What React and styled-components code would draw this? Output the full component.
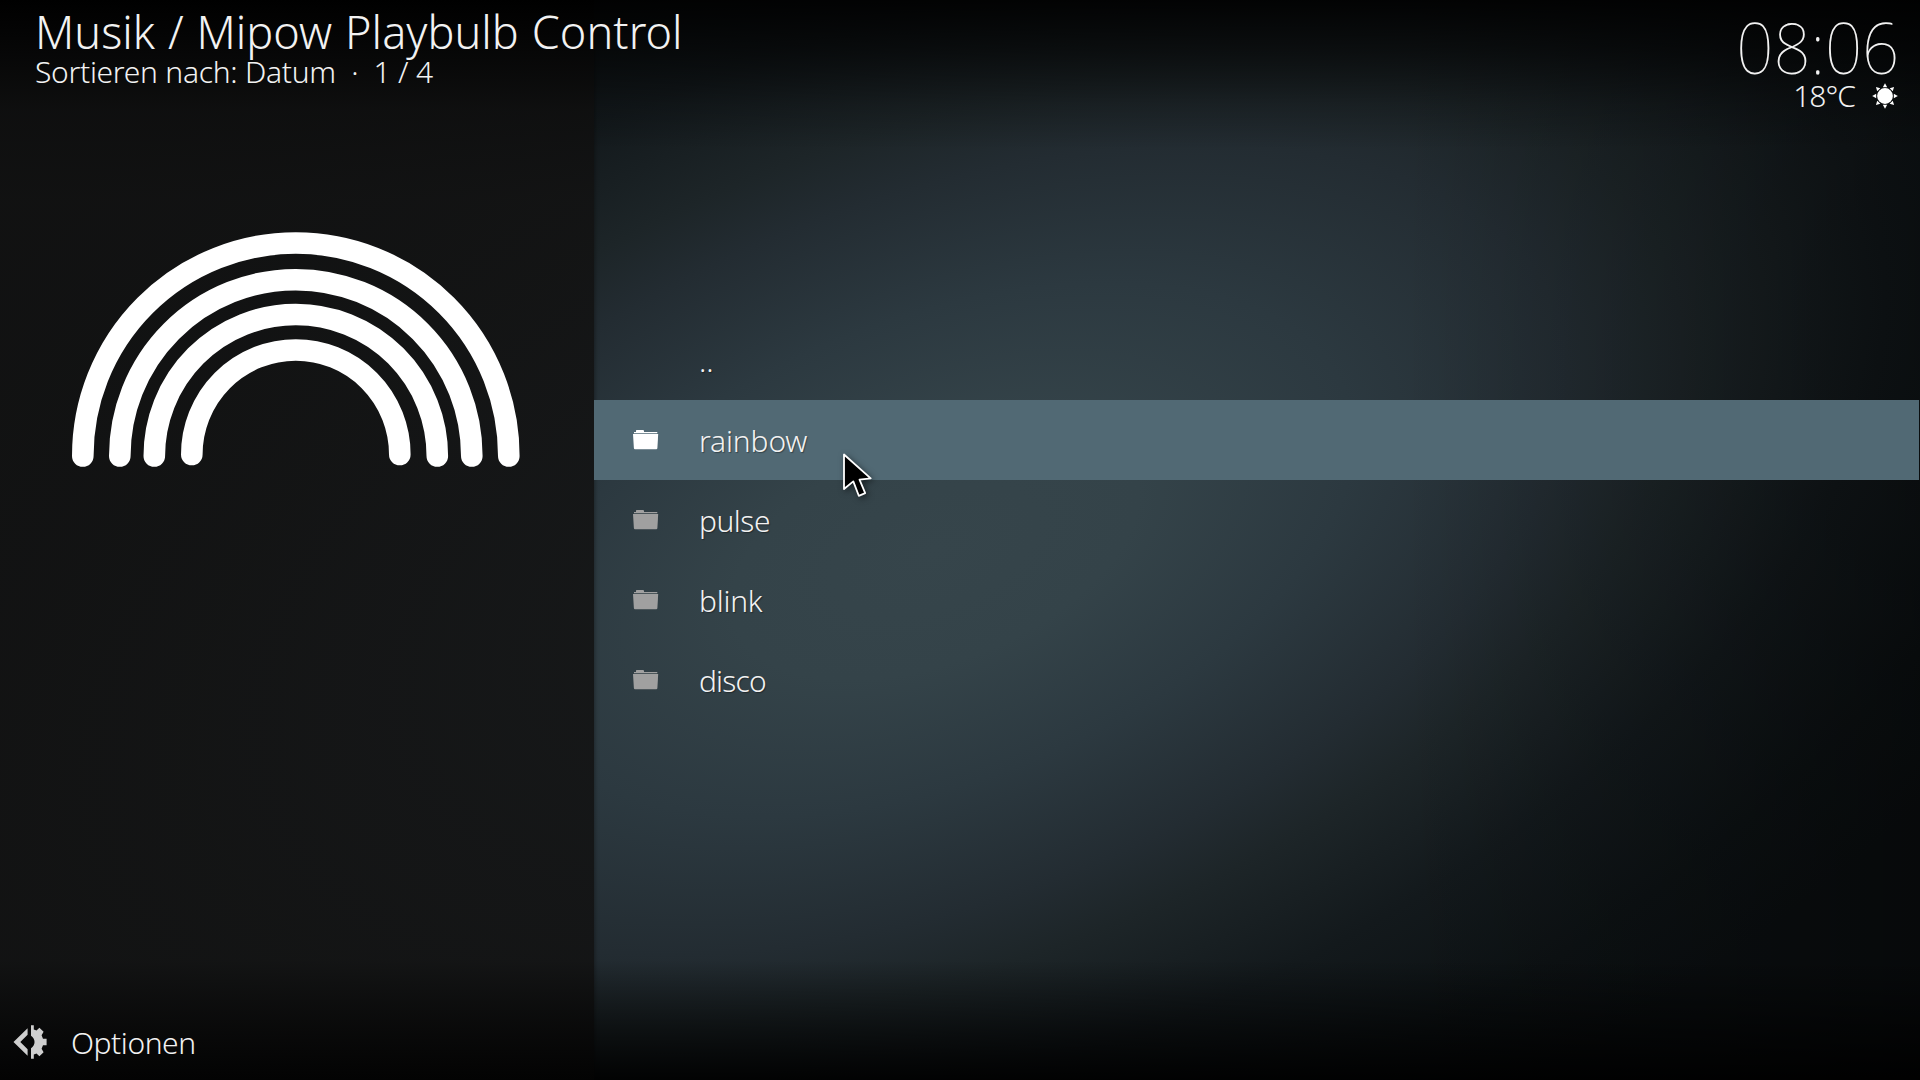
import React from "react";
import styled, { createGlobalStyle } from "styled-components";

const Global = createGlobalStyle`
  *{box-sizing:border-box}
  body{margin:0;background:#000;overflow:hidden}
`;

const Screen = styled.div`
  position: relative;
  isolation: isolate;
  width: 1920px;
  height: 1080px;
  display: flex;
  overflow: hidden;
  color: #f2f2f2;
  font-family: "Noto Sans", "Open Sans", sans-serif;
  font-weight: 300;
  font-size: 30px;
  background: #0b0f11;
`;

const Backdrop = styled.div`
  position: absolute;
  inset: 0;
  z-index: -1;
  &::before {
    content: "";
    position: absolute;
    left: -1065px;
    top: -1450px;
    width: 4000px;
    height: 4000px;
    transform: rotate(-21deg);
    background: radial-gradient(
      ellipse 1330px 700px at center,
      #36454b 0%, #344349 16%, #2c3940 33%, #232c32 50%, #1d2528 59%, #13191c 75%, #0d1214 92%, #0b0f11 105%
    );
  }
  &::after {
    content: "";
    position: absolute;
    inset: 0;
    background:
      linear-gradient(to bottom, rgba(0,0,0,0.9) 0, rgba(0,0,0,0.6) 50px, rgba(0,0,0,0.2) 105px, rgba(0,0,0,0) 150px),
      linear-gradient(to top, rgba(0,0,0,0.92) 0, rgba(0,0,0,0.55) 50px, rgba(0,0,0,0) 120px),
      linear-gradient(to right, rgba(0,0,0,0) 1400px, rgba(0,0,0,0.2) 1700px, rgba(0,0,0,0.4) 1920px);
  }
`;

const Side = styled.aside`
  width: 594px;
  height: 1080px;
  flex: none;
  display: flex;
  flex-direction: column;
  background: linear-gradient(to bottom, rgba(0,0,0,0.94) 0, rgba(15,15,15,0.88) 110px, rgba(18,18,18,0.88) 200px, rgba(18,18,18,0.88) 960px, rgba(3,3,3,0.94) 1080px);
  box-shadow: 1px 0 4px rgba(0, 0, 0, 0.35);
`;

const Heading = styled.header`
  height: 231px;
  padding: 1px 0 0 35px;
  white-space: pre;
`;
const Title = styled.h1`
  margin: 0;
  font-size: 45px;
  line-height: 62px;
  font-weight: 300;
  letter-spacing: 0.05px;
  word-spacing: 1.1px;
`;
const Sorting = styled.div`
  margin-top: -11px;
  line-height: 40px;
  letter-spacing: -0.3px;
  word-spacing: 0.2px;
`;
const Art = styled.svg`
  display: block;
  width: 594px;
  height: 240px;
`;
const Options = styled.footer`
  margin-top: auto;
  height: 76px;
  padding-left: 13px;
  display: flex;
  align-items: center;
  gap: 24px;
  letter-spacing: -0.45px;
`;

const Main = styled.main`
  width: 1326px;
  height: 1080px;
  display: flex;
  flex-direction: column;
`;
const Status = styled.div`
  height: 320px;
  padding: 5px 22px 0 0;
  display: flex;
  flex-direction: column;
  align-items: flex-end;
`;
const Clock = styled.time`
  margin-right: -1px;
  font-size: 70.5px;
  font-weight: 100;
  line-height: 84px;
  transform: scaleX(0.925);
  transform-origin: right center;
`;
const Weather = styled.div`
  margin-top: -13px;
  display: flex;
  align-items: center;
  gap: 17px;
  line-height: 40px;
  letter-spacing: -1px;
`;

const List = styled.ul`
  margin: 0;
  padding: 0 1px 0 0;
  list-style: none;
`;
const Row = styled.li`
  height: 80px;
  padding: 2px 0 0 39px;
  display: flex;
  align-items: center;
  background: ${(p) => (p.$active ? "#516974" : "transparent")};
  color: ${(p) => (p.$active ? "#fff" : "#a0a0a0")};
`;
const IconSlot = styled.span`
  width: 66px;
  height: 22px;
  display: flex;
`;
const Label = styled.span`
  color: #f2f2f2;
  line-height: 40px;
  letter-spacing: ${(p) => p.$tracking}px;
  text-shadow: 1px 1px 1px rgba(0, 0, 0, 0.35);
`;

const Cursor = styled.svg`
  position: absolute;
  left: 839px;
  top: 450px;
  filter: drop-shadow(2px 2px 3px rgba(0, 0, 0, 0.5));
`;

const arcs = [
  { r: 213, ry: 213, end: 456 },
  { r: 176, ry: 176.3, end: 456 },
  { r: 141.5, ry: 141.5, end: 456 },
  { r: 104, ry: 104.5, end: 454.5 },
];

const Rainbow = () => (
  <Art viewBox="0 231 594 240" fill="none" stroke="#fff" strokeWidth="21.6" strokeLinecap="round">
    {arcs.map(({ r, ry, end }) => (
      <path key={r} d={`M${295.8 - r} ${end}A${r} ${ry} 0 0 1 ${295.8 + r} ${end}`} />
    ))}
  </Art>
);

const Folder = () => (
  <svg width="26" height="20" viewBox="0 0 26 20" fill="currentColor">
    <path d="M1 3.2V2H3V0.6Q3 0 3.7 0H10Q11 0 11 1V2H24.3V3.2Z" />
    <path d="M0 4H25.2L24.4 18Q24.3 19.2 23.2 19.2H2Q1 19.2 0.9 18Z" />
  </svg>
);

const Sun = () => (
  <svg width="26" height="26" viewBox="-13 -13 26 26" fill="#fff">
    <circle r="7.9" />
    {[0, 45, 90, 135, 180, 225, 270, 315].map((a) => (
      <path key={a} d="M-2.2 -8.8L0 -12.8L2.2 -8.8Z" transform={`rotate(${a})`} />
    ))}
  </svg>
);

const OptionsIcon = () => (
  <svg width="34" height="34" viewBox="0 0 34 34" fill="#cfcfcf">
    <path d="M14.6 3.3V9.7L7.3 17L14.6 24.3V30.7L0.5 17Z" />
    <path d="M18 0.3H20.8V4.5L23.5 5.5L26.4 2.8L30.6 6.8L28.6 10.2L30 13.7H33.6V20.3H30L28.6 23.8L30.6 27.2L26.4 31.2L23.5 28.5L20.8 29.5V33.7H18V23.2A7.2 7.2 0 0 0 18 10.8Z" />
  </svg>
);

const items = [
  { name: "..", tracking: 0 },
  { name: "rainbow", tracking: -0.15 },
  { name: "pulse", tracking: -0.5 },
  { name: "blink", tracking: -0.25 },
  { name: "disco", tracking: -0.85 },
];

export default function App() {
  return (
    <Screen>
      <Global />
      <Backdrop />
      <Side>
        <Heading>
          <Title>Musik / Mipow Playbulb Control</Title>
          <Sorting>{"Sortieren nach: Datum  ·  1 / 4"}</Sorting>
        </Heading>
        <Rainbow />
        <Options>
          <OptionsIcon />
          <span>Optionen</span>
        </Options>
      </Side>
      <Main>
        <Status>
          <Clock>08:06</Clock>
          <Weather>
            <span>18°C</span>
            <Sun />
          </Weather>
        </Status>
        <List>
          {items.map(({ name, tracking }) => (
            <Row key={name} $active={name === "rainbow"}>
              <IconSlot>{name !== ".." && <Folder />}</IconSlot>
              <Label $tracking={tracking}>{name}</Label>
            </Row>
          ))}
        </List>
      </Main>
      <Cursor width="36" height="50" viewBox="0 0 36 50">
        <path
          d="M5 4.5V39L14.3 31.4L19.8 45.8L26.2 43.2L20.5 29.6L31.7 28.4Z"
          fill="#000"
          stroke="#fff"
          strokeWidth="1.8"
          strokeLinejoin="round"
        />
      </Cursor>
    </Screen>
  );
}
